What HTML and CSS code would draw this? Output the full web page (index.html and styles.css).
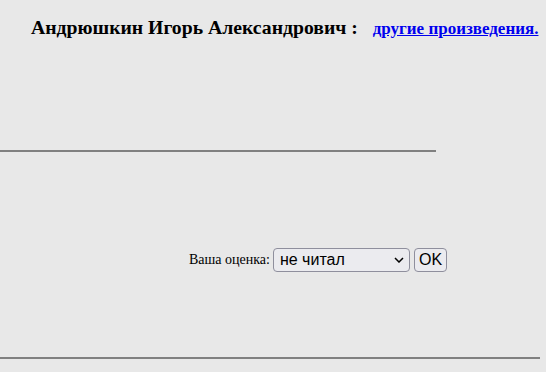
FILE: index.html
```html
<!DOCTYPE html>
<html lang="ru">
<head>
<meta charset="utf-8">
<link rel="stylesheet" href="styles.css">
</head>
<body>
<div class="header">
  <h3 class="title">Андрюшкин Игорь Александрович : <small class="more"><a href="#">другие произведения.</a></small></h3>
</div>
<hr class="rule rule-short">
<form class="rating">
  <span class="label">Ваша оценка:</span>
  <span class="select-wrap">
    <select class="select"><option>не читал</option></select>
    <svg class="chevron" width="10" height="6" viewBox="0 0 10 6"><path d="M1 1 L5 5 L9 1" fill="none" stroke="#000" stroke-width="1.5"/></svg>
  </span>
  <button type="button" class="ok">OK</button>
</form>
<hr class="rule rule-long">
</body>
</html>
```
FILE: styles.css
```css
html, body {
  margin: 0;
  padding: 0;
  background: #e8e8e8;
  font-family: "Liberation Serif", "Times New Roman", serif;
  color: #000;
}
.header {
  padding: 15px 0 0 31px;
  height: 136px;
  box-sizing: border-box;
}
.title {
  margin: 0;
  font-size: 19.7px;
  font-weight: bold;
  white-space: nowrap;
  line-height: 24px;
}
.more {
  font-size: 17px;
  margin-left: 10px;
}
.more a {
  color: #0000ee;
}
.rule {
  border: none;
  background: #808080;
  height: 2px;
  margin: 0;
}
.rule-short {
  width: 436px;
  margin-top: 14px;
}
.rule-long {
  width: 540px;
}
.rating {
  display: flex;
  align-items: center;
  margin: 0;
  padding: 10px 0 0 189px;
  height: 205px;
  box-sizing: border-box;
  gap: 3px;
}
.label {
  font-size: 14px;
}
.select-wrap {
  position: relative;
  display: inline-flex;
}
.select {
  appearance: none;
  -webkit-appearance: none;
  width: 137px;
  height: 24px;
  box-sizing: border-box;
  border: 1px solid #8f8f9d;
  border-radius: 4px;
  background: #ebebef;
  color: #000;
  font-family: "Liberation Sans", Arial, sans-serif;
  font-size: 16px;
  padding: 0 0 0 6px;
  margin: 0;
}
.chevron {
  position: absolute;
  right: 6px;
  top: 9px;
  pointer-events: none;
}
.ok {
  height: 24px;
  box-sizing: border-box;
  border: 1px solid #8f8f9d;
  border-radius: 4px;
  background: #ebebef;
  color: #000;
  font-family: "Liberation Sans", Arial, sans-serif;
  font-size: 16px;
  padding: 0 4px;
  margin: 0 0 0 1px;
}
```
